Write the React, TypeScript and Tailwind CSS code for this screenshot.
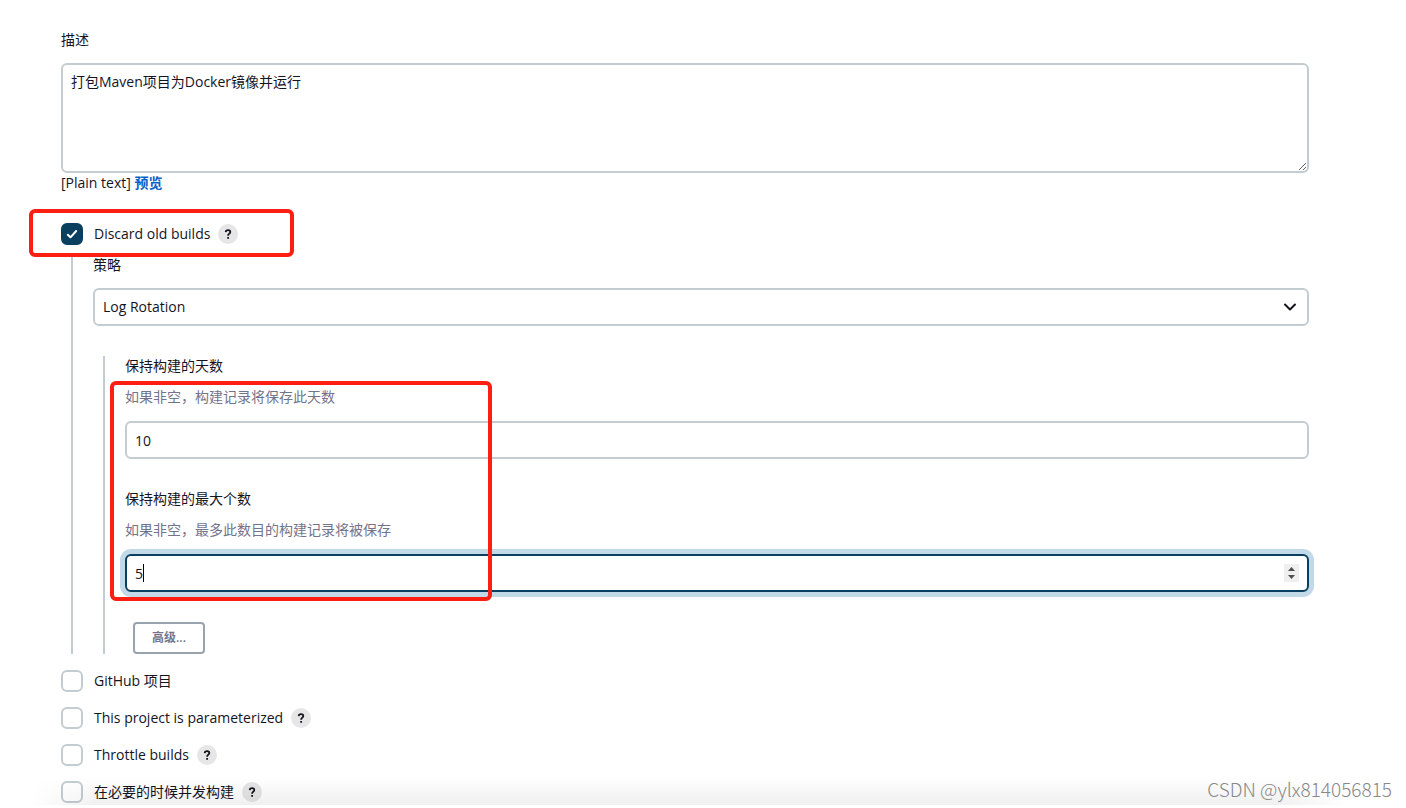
import React from 'react';

interface OptionRowProps {
  id: string;
  label: string;
  checked?: boolean;
  help?: boolean;
}

interface NumberFieldProps {
  id: string;
  label: string;
  hint: string;
  value: string;
  active?: boolean;
}

const HelpButton = ({ label }: { label: string }) => (
  <button
    type="button"
    aria-label={`Help for ${label}`}
    className="flex h-5 w-5 items-center justify-center rounded-full bg-[#e6e6e6]"
  >
    <svg viewBox="0 0 20 20" className="h-5 w-5" fill="none" stroke="#14141f" strokeWidth="1.8">
      <path d="M7.7 8.1C7.8 6.8 8.7 6.1 10 6.1s2.3.8 2.3 1.9c0 1.6-2.2 1.7-2.2 3.7" />
      <path d="M10.1 12.9v1.9" />
    </svg>
  </button>
);

const OptionRow = ({ id, label, checked = false, help = false }: OptionRowProps) => (
  <div className="flex h-[22px] items-center">
    <span className="relative flex h-[22px] w-[22px]">
      <input
        id={id}
        type="checkbox"
        defaultChecked={checked}
        className="peer h-[22px] w-[22px] appearance-none rounded-md border-2 border-[#c3ccd1] bg-white checked:border-[#0b3f60] checked:bg-[#0b3f60]"
      />
      <svg
        viewBox="0 0 22 22"
        className="pointer-events-none absolute inset-0 hidden peer-checked:block"
        fill="none"
        stroke="#fff"
        strokeWidth="2"
        strokeLinecap="round"
        strokeLinejoin="round"
      >
        <path d="M6.8 11.7l2.7 2.6 5.7-6.3" />
      </svg>
    </span>
    <label htmlFor={id} className="mr-2 pl-[11px]">{label}</label>
    {help && <HelpButton label={label} />}
  </div>
);

const NumberField = ({ id, label, hint, value, active = false }: NumberFieldProps) => (
  <div>
    <label htmlFor={id} className="block">{label}</label>
    <p className="mt-[11px] text-[#73738c]">{hint}</p>
    <div className="relative mt-[14px]">
      <input
        id={id}
        type="number"
        defaultValue={value}
        className={
          active
            ? 'block h-[38px] w-full rounded-md border-2 border-[#0b3f60] bg-white px-2 shadow-[0_0_0_5px_#c2d9e7] outline-none [&::-webkit-inner-spin-button]:opacity-0'
            : 'block h-[38px] w-full rounded-md border-2 border-[#c3ccd1] bg-white px-2 outline-none [&::-webkit-inner-spin-button]:opacity-0'
        }
      />
      {active && (
        <>
          <span className="absolute top-[10px] left-[18px] h-[18px] w-px bg-black" />
          <svg viewBox="0 0 15 18" className="pointer-events-none absolute top-[10px] right-[10px] h-[18px] w-[15px]">
            <path d="M0 0h15v18H0z" fill="#efefef" />
            <path d="M4 7l3.5-4L11 7zM4 11l3.5 4 3.5-4z" fill="#505050" />
          </svg>
        </>
      )}
    </div>
  </div>
);

const App = () => (
  <div
    className="bg-white text-sm leading-5 text-[#14141f]"
    style={{ fontFamily: '"Open Sans", "Noto Sans CJK SC", sans-serif' }}
  >
    <main className="relative pt-[30px] pr-[97px] pb-[2px] pl-[61px]">
      {/* Description */}
      <label htmlFor="description" className="block">描述</label>
      <textarea
        id="description"
        defaultValue="打包Maven项目为Docker镜像并运行"
        className="mt-[13px] block h-[110px] w-full resize rounded-md border-2 border-[#c3ccd1] bg-white px-2 py-[7px] outline-none"
      />
      <div>
        [Plain text] <a href="#preview" className="font-semibold text-[#0b60c9]">预览</a>
      </div>

      {/* Discard old builds */}
      <div className="relative mt-[30px]">
        <OptionRow id="discard" label="Discard old builds" checked help />
        <div className="pointer-events-none absolute -top-[14px] -left-8 h-[48px] w-[265px] rounded-md border-4 border-[#ff1e12]" />
      </div>

      <div className="mt-[10px] ml-[10px] border-l-2 border-[#c3ccd1] pl-5">
        <label htmlFor="strategy" className="block">策略</label>
        <div className="relative mt-[13px]">
          <select
            id="strategy"
            className="block h-[38px] w-full appearance-none rounded-md border-2 border-[#c3ccd1] bg-white px-2 outline-none"
          >
            <option>Log Rotation</option>
          </select>
          <svg
            viewBox="0 0 14 8"
            className="pointer-events-none absolute top-[15px] right-3 h-2 w-[14px]"
            fill="none"
            stroke="#14141f"
            strokeWidth="2"
            strokeLinecap="round"
            strokeLinejoin="round"
          >
            <path d="M2 1.5l5 5 5-5" />
          </svg>
        </div>

        <div className="mt-[30px] ml-[10px] border-l-2 border-[#c3ccd1] pl-5">
          <div className="relative flex flex-col gap-[30px]">
            <NumberField id="days" label="保持构建的天数" hint="如果非空，构建记录将保存此天数" value="10" />
            <NumberField id="count" label="保持构建的最大个数" hint="如果非空，最多此数目的构建记录将被保存" value="5" active />
            <div className="pointer-events-none absolute top-[25px] -left-[15px] h-[220px] w-[382px] rounded-md border-4 border-[#ff1e12]" />
          </div>
          <button
            type="button"
            className="mt-[30px] ml-2 block h-8 w-[72px] rounded border-2 border-[#98a3af] bg-white text-xs font-semibold text-[#73738c]"
          >
            高级...
          </button>
        </div>
      </div>

      {/* Remaining options */}
      <div className="mt-4 flex flex-col gap-[15px]">
        <OptionRow id="github" label="GitHub 项目" />
        <OptionRow id="parameterized" label="This project is parameterized" help />
        <OptionRow id="throttle" label="Throttle builds" help />
        <OptionRow id="concurrent" label="在必要的时候并发构建" help />
      </div>

      {/* Shadow of the sticky footer */}
      <div className="pointer-events-none absolute right-[60px] bottom-0 left-[30px] h-7 bg-linear-to-b from-transparent to-black/6 mask-x-from-95% mask-x-to-100%" />
      <div
        className="pointer-events-none absolute right-[14px] bottom-[6px] text-[19px] leading-5 font-light text-[#888]"
        style={{ fontFamily: '"Noto Sans CJK SC", sans-serif' }}
      >
        CSDN @ylx814056815
      </div>
    </main>
  </div>
);

export default App;
